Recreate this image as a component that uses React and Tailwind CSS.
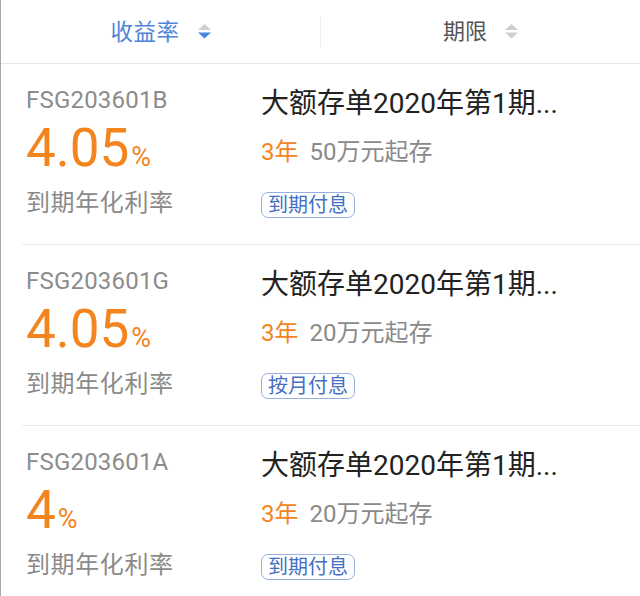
import React from "react";

const FONT = { fontFamily: 'Roboto, "Noto Sans CJK SC", "Noto Sans", sans-serif' };

function SortIcon({ active }) {
  return (
    <svg width="13" height="15" viewBox="0 0 13 15" className="block">
      <polygon points="6.5,0 13,6 0,6" fill="#cfcfcf" />
      <polygon points="0,8.5 13,8.5 6.5,14.5" fill={active ? "#4a86e0" : "#cfcfcf"} />
    </svg>
  );
}

const rows = [
  { code: "FSG203601B", rate: "4.05", amount: "50万元起存", tag: "到期付息" },
  { code: "FSG203601G", rate: "4.05", amount: "20万元起存", tag: "按月付息" },
  { code: "FSG203601A", rate: "4", amount: "20万元起存", tag: "到期付息" },
];

function Row({ r }) {
  return (
    <div className="ml-[21px] h-[181px] border-b border-[#ebebeb] pl-[4px] flex">
      <div className="w-[235px] pt-[21px] flex flex-col">
        <div className="text-[24px] leading-[30px] text-[#8c8c8c] tracking-[0.2px]">{r.code}</div>
        <div className="mt-[6px] h-[54px] flex items-baseline text-[#f3841e] leading-[54px]">
          <span className="text-[53px]">{r.rate}</span>
          <span className="text-[27px] ml-[2px]">%</span>
        </div>
        <div className="mt-[13px] text-[24px] leading-[30px] text-[#8a8a8a] tracking-[0.6px]">到期年化利率</div>
      </div>
      <div className="pt-[23px] flex flex-col items-start">
        <div className="text-[28px] leading-[34px] text-[#222222] whitespace-nowrap">大额存单2020年第1期...</div>
        <div className="mt-[16px] text-[24px] leading-[30px] whitespace-nowrap flex">
          <span className="text-[#f3841e]">3年</span>
          <span className="text-[#8a8a8a] ml-[11px]">{r.amount}</span>
        </div>
        <div className="mt-[25px] border border-[#98b0dd] rounded-[7px] px-[6px] text-[20px] leading-[24px] text-[#4470c2]">
          {r.tag}
        </div>
      </div>
    </div>
  );
}

export default function App() {
  return (
    <div style={FONT} className="w-[640px] h-[596px] overflow-hidden bg-white border-l border-[#a8a8a8]">
      <div className="h-[64px] border-b border-[#e6e6e6] flex items-center">
        <div className="flex-1 flex items-center justify-center gap-[18px]">
          <span className="text-[22.5px] leading-[30px] text-[#4d84d9] tracking-[0.5px]">收益率</span>
          <SortIcon active />
        </div>
        <div className="w-px h-[31px] bg-[#ececec]" />
        <div className="flex-1 flex items-center justify-center gap-[18px]">
          <span className="text-[22px] leading-[30px] text-[#555555]">期限</span>
          <SortIcon />
        </div>
      </div>
      {rows.map((r, i) => (
        <Row key={i} r={r} />
      ))}
    </div>
  );
}
